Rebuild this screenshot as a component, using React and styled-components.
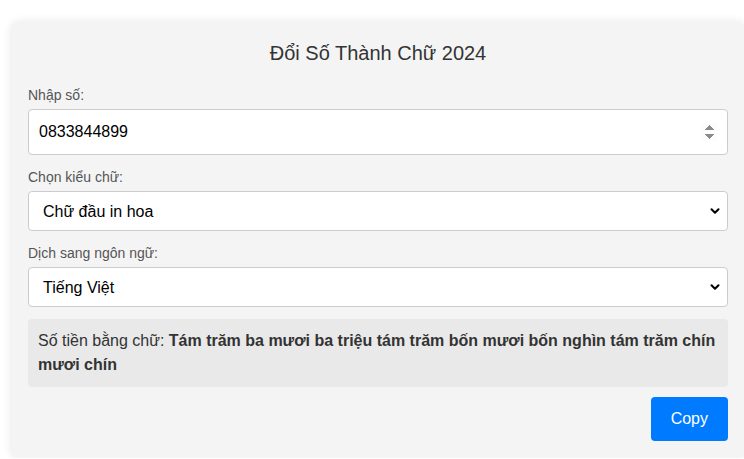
import React, { useState } from 'react';
import styled, { createGlobalStyle } from 'styled-components';
import { ChevronDown } from 'lucide-react';

const GlobalStyle = createGlobalStyle`
    body {
        margin: 0;
        background: #fff;
        font-family: "Liberation Sans", Arial, sans-serif;
        overflow: hidden;
    }
`;

function readVietnamese() {
    return 'Tám trăm ba mươi ba triệu tám trăm bốn mươi bốn nghìn tám trăm chín mươi chín';
}

function App() {
    const [value, setValue] = useState('0833844899');

    return (
        <>
            <GlobalStyle />
            <Card>
                <Title>Đổi Số Thành Chữ 2024</Title>

                <Group>
                    <Label htmlFor="number">Nhập số:</Label>
                    <NumberInput
                        id="number"
                        type="number"
                        autoFocus
                        value={value}
                        onChange={(e) => setValue(e.target.value)}
                    />
                </Group>

                <Group>
                    <Label htmlFor="style">Chọn kiểu chữ:</Label>
                    <SelectWrap>
                        <Select id="style" defaultValue="cap">
                            <option value="cap">Chữ đầu in hoa</option>
                            <option value="lower">chữ thường</option>
                            <option value="upper">CHỮ IN HOA</option>
                        </Select>
                        <Arrow size={14} strokeWidth={3.5} />
                    </SelectWrap>
                </Group>

                <Group $last>
                    <Label htmlFor="lang">Dịch sang ngôn ngữ:</Label>
                    <SelectWrap>
                        <Select id="lang" defaultValue="vi">
                            <option value="vi">Tiếng Việt</option>
                            <option value="en">English</option>
                        </Select>
                        <Arrow size={14} strokeWidth={3.5} />
                    </SelectWrap>
                </Group>

                <Result>
                    Số tiền bằng chữ: <strong>{readVietnamese(value)}</strong>
                </Result>

                <Actions>
                    <CopyBtn>Copy</CopyBtn>
                </Actions>
            </Card>
        </>
    );
}

export default App;

const Card = styled.div`
    width: 700px;
    margin: 22px 0 0 11px;
    padding: 17px;
    background: #f4f4f4;
    border-radius: 8px;
    box-shadow: 0 0 10px rgba(0, 0, 0, 0.1);
`;

const Title = styled.h2`
    margin: 3px 0 22px;
    font-size: 20px;
    line-height: 23px;
    font-weight: normal;
    text-align: center;
    color: #333;
`;

const Group = styled.div`
    margin-bottom: ${(p) => (p.$last ? '12px' : '14px')};
`;

const Label = styled.label`
    display: block;
    margin-bottom: 5px;
    font-size: 14px;
    line-height: 17px;
    color: #555;
`;

const fieldBase = `
    box-sizing: border-box;
    width: 100%;
    border: 1px solid #ccc;
    border-radius: 4px;
    background: #fff;
    font-family: "Liberation Sans", Arial, sans-serif;
    font-size: 16px;
    color: #000;
    &:focus {
        outline: none;
    }
`;

const NumberInput = styled.input`
    ${fieldBase}
    display: block;
    height: 46px;
    padding: 0 10px;
`;

const SelectWrap = styled.div`
    position: relative;
`;

const Select = styled.select`
    ${fieldBase}
    display: block;
    height: 40px;
    padding: 0 30px 0 14px;
    appearance: none;
    -webkit-appearance: none;
`;

const Arrow = styled(ChevronDown)`
    position: absolute;
    right: 6px;
    top: 50%;
    transform: translateY(-50%);
    color: #000;
    pointer-events: none;
`;

const Result = styled.div`
    padding: 10px;
    background: #e9e9e9;
    border-radius: 4px;
    font-size: 16px;
    line-height: 24px;
    color: #333;

    strong {
        font-weight: bold;
    }
`;

const Actions = styled.div`
    display: flex;
    justify-content: flex-end;
    margin-top: 10px;
`;

const CopyBtn = styled.button`
    height: 44px;
    padding: 0 20px;
    border: none;
    border-radius: 4px;
    background: #007bff;
    color: #fff;
    font-family: "Liberation Sans", Arial, sans-serif;
    font-size: 16px;
    cursor: pointer;
`;
